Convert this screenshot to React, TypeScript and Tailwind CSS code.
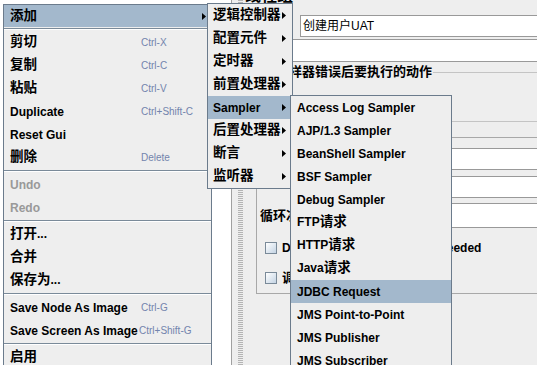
import React from "react";

const CJK_RE = /([\u3000-\u9fff\uff00-\uffef]+)/;

function T({ text, cjk = "text-[13.5px]" }: { text: string; cjk?: string }) {
  const parts = text.split(CJK_RE).filter((p) => p.length > 0);
  return (
    <>
      {parts.map((p, i) =>
        CJK_RE.test(p) ? (
          <span key={i} className={cjk}>
            {p}
          </span>
        ) : (
          <span key={i}>{p}</span>
        )
      )}
    </>
  );
}

const Arrow = () => (
  <svg width="4" height="7" viewBox="0 0 4 7" className="shrink-0">
    <path d="M0 0L4 3.5L0 7Z" fill="#000" />
  </svg>
);

type Item = {
  label?: string;
  sc?: string;
  disabled?: boolean;
  sel?: boolean;
  arrow?: boolean;
  sep?: boolean;
  h22?: boolean;
};

const mainItems: Item[] = [
  { label: "添加", sel: true, arrow: true, h22: true },
  { sep: true },
  { label: "剪切", sc: "Ctrl-X" },
  { label: "复制", sc: "Ctrl-C" },
  { label: "粘贴", sc: "Ctrl-V" },
  { label: "Duplicate", sc: "Ctrl+Shift-C" },
  { label: "Reset Gui" },
  { label: "删除", sc: "Delete" },
  { sep: true },
  { label: "Undo", disabled: true },
  { label: "Redo", disabled: true },
  { sep: true },
  { label: "打开..." },
  { label: "合并" },
  { label: "保存为..." },
  { sep: true },
  { label: "Save Node As Image", sc: "Ctrl-G" },
  { label: "Save Screen As Image", sc: "Ctrl+Shift-G" },
  { sep: true },
  { label: "启用" },
];

const subItems: Item[] = [
  { label: "逻辑控制器", arrow: true },
  { label: "配置元件", arrow: true },
  { label: "定时器", arrow: true },
  { label: "前置处理器", arrow: true },
  { label: "Sampler", arrow: true, sel: true },
  { label: "后置处理器", arrow: true },
  { label: "断言", arrow: true },
  { label: "监听器", arrow: true },
];

const samplerItems: Item[] = [
  { label: "Access Log Sampler" },
  { label: "AJP/1.3 Sampler" },
  { label: "BeanShell Sampler" },
  { label: "BSF Sampler" },
  { label: "Debug Sampler" },
  { label: "FTP请求" },
  { label: "HTTP请求" },
  { label: "Java请求" },
  { label: "JDBC Request", sel: true },
  { label: "JMS Point-to-Point" },
  { label: "JMS Publisher" },
  { label: "JMS Subscriber" },
  { label: "JUnit Request" },
];

function Sep() {
  return (
    <div className="h-[4px] flex flex-col justify-center">
      <div className="h-px bg-[#7a8a99]" />
      <div className="h-px bg-white" />
    </div>
  );
}

function MainRow({ it }: { it: Item }) {
  if (it.sep) return <Sep />;
  return (
    <div
      className={`${it.h22 ? "h-[22px]" : "h-[23px]"} flex items-center pl-[6px] pr-[5px] ${
        it.sel ? "bg-[#a3b8cc]" : ""
      }`}
    >
      <div
        className={`w-[131px] shrink-0 whitespace-nowrap font-bold text-[12px] ${
          it.disabled ? "text-[#999999]" : "text-black"
        }`}
      >
        <T text={it.label || ""} />
      </div>
      {it.sc && (
        <div
          className={`whitespace-nowrap text-[10px] text-[#7384ad] ${
            it.sc === "Ctrl+Shift-G" ? "ml-[-2px]" : ""
          }`}
        >
          {it.sc}
        </div>
      )}
      {it.arrow && (
        <div className="ml-auto">
          <Arrow />
        </div>
      )}
    </div>
  );
}

function SubRow({ it, pl }: { it: Item; pl: string }) {
  return (
    <div
      className={`h-[23px] flex items-center ${pl} pr-[6px] ${it.sel ? "bg-[#a3b8cc]" : ""}`}
    >
      <div className="whitespace-nowrap font-bold text-[12px] text-black">
        <T text={it.label || ""} />
      </div>
      {it.arrow && (
        <div className="ml-auto">
          <Arrow />
        </div>
      )}
    </div>
  );
}

function CheckBox() {
  return (
    <div className="w-[12px] h-[12px] shrink-0 border border-[#7a8a99] bg-[linear-gradient(135deg,#ffffff,#c4d4e4)]" />
  );
}

export default function App() {
  return (
    <div className="relative w-[537px] h-[365px] overflow-hidden bg-[#eeeeee] text-black font-['Liberation_Sans','Noto_Sans_CJK_SC',sans-serif]">
      {/* background window */}
      <div className="flex h-full">
        {/* tree */}
        <div className="w-[232px] shrink-0 bg-white border-r border-[#a0a0a0]" />
        {/* split divider */}
        <div className="w-[13px] shrink-0 pl-[6px]">
          <div className="w-[5px] h-full bg-[repeating-linear-gradient(to_bottom,#b4b4b4_0px,#b4b4b4_1px,transparent_1px,transparent_2px)]" />
        </div>
        {/* right panel */}
        <div className="w-[330px] shrink-0 flex flex-col">
          <div className="h-[15px] overflow-hidden">
            <div className="mt-[-12px] text-[16px] leading-[16px] font-bold">线程组</div>
          </div>
          <div className="flex h-[22px]">
            <div className="w-[55px] shrink-0 flex items-center font-bold text-[13px]">名称：</div>
            <div className="flex-1 flex items-center border border-[#999999] bg-white pl-[2px] text-[12px]">
              创建用户UAT
            </div>
          </div>
          <div className="flex h-[23px] mt-[2px]">
            <div className="w-[40px] shrink-0 flex items-center font-bold text-[13px]">注释：</div>
            <div className="flex-1 border border-[#999999] bg-white" />
          </div>
          {/* box 1 */}
          <div className="mt-[2px] ml-[11px] flex flex-col">
            <div className="h-[16px] flex items-center">
              <div className="w-[6px] border-t border-[#c4c4c4]" />
              <div className="px-[1px] font-bold text-[13px] leading-[16px] whitespace-nowrap">
                在取样器错误后要执行的动作
              </div>
              <div className="flex-1 border-t border-[#c4c4c4]" />
            </div>
            <div className="h-[42px] border-x border-b border-[#c4c4c4]" />
          </div>
          {/* box 2 */}
          <div className="mt-[7px] ml-[11px] flex flex-col">
            <div className="h-[16px] flex items-center">
              <div className="w-[6px] border-t border-[#a8a8a8]" />
              <div className="px-[1px] font-bold text-[13px] leading-[16px] whitespace-nowrap">
                线程属性
              </div>
              <div className="flex-1 border-t border-[#a8a8a8]" />
            </div>
            <div className="border-x border-b border-[#a8a8a8] pt-[3px] pl-[3px] pb-[5px] flex flex-col">
              <div className="flex h-[22px]">
                <div className="w-[100px] shrink-0 flex items-center font-bold text-[13px]">线程数：</div>
                <div className="flex-1 border border-[#999999] bg-white" />
              </div>
              <div className="flex h-[22px] mt-[6px]">
                <div className="w-[100px] shrink-0" />
                <div className="flex-1 border border-[#999999] bg-white" />
              </div>
              <div className="flex h-[25px] mt-[5px]">
                <div className="w-[100px] shrink-0 flex items-center font-bold text-[13px]">循环次数</div>
                <div className="flex-1 border border-[#999999] bg-white" />
              </div>
              <div className="flex h-[20px] mt-[10px] items-center pl-[5px] gap-[5px]">
                <CheckBox />
                <div className="font-bold text-[12px] whitespace-nowrap">Delay Thread creation until needed</div>
              </div>
              <div className="flex h-[20px] mt-[10px] items-center pl-[5px] gap-[5px]">
                <CheckBox />
                <div className="font-bold text-[13px] whitespace-nowrap">调度器</div>
              </div>
            </div>
          </div>
        </div>
      </div>

      {/* main popup menu */}
      <div className="absolute left-[3px] top-[4px] w-[209px] h-[380px] border border-[#6b7b8c] bg-[#eeeeee] flex flex-col">
        {mainItems.map((it, i) => (
          <MainRow key={i} it={it} />
        ))}
      </div>

      {/* 添加 submenu */}
      <div className="absolute left-[207px] top-[3px] w-[86px] border border-[#6b7b8c] bg-[#eeeeee] flex flex-col">
        {subItems.map((it, i) => (
          <SubRow key={i} it={it} pl="pl-[5px]" />
        ))}
      </div>

      {/* Sampler submenu */}
      <div className="absolute left-[290px] top-[95px] w-[162px] border border-[#6b7b8c] bg-[#eeeeee] flex flex-col">
        {samplerItems.map((it, i) => (
          <SubRow key={i} it={it} pl="pl-[6px]" />
        ))}
      </div>
    </div>
  );
}
